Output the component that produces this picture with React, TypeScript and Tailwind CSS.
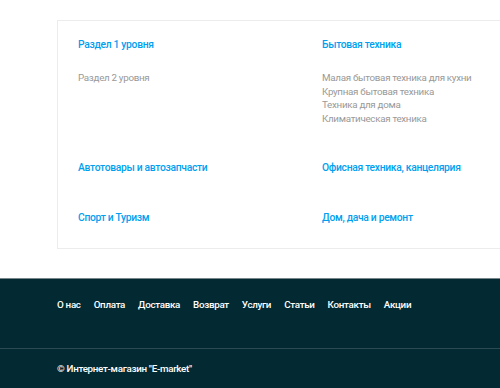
const sections = [
  { title: "Раздел 1 уровня", items: ["Раздел 2 уровня"] },
  {
    title: "Бытовая техника",
    items: [
      "Малая бытовая техника для кухни",
      "Крупная бытовая техника",
      "Техника для дома",
      "Климатическая техника",
    ],
  },
  { title: "Автотовары и автозапчасти", items: [] },
  { title: "Офисная техника, канцелярия", items: [] },
  { title: "Спорт и Туризм", items: [] },
  { title: "Дом, дача и ремонт", items: [] },
];

const links = ["О нас", "Оплата", "Доставка", "Возврат", "Услуги", "Статьи", "Контакты", "Акции"];

export default function App() {
  return (
    <div className="w-[500px] h-[388px] overflow-hidden bg-white font-['Roboto',sans-serif]">
      <div className="pl-[57px] pt-[20px] pb-[29px]">
        <div className="w-[600px] border border-r-0 border-[#ececec] pt-[17px] pb-[23px] pl-[20px]">
          <div className="grid grid-cols-[244px_244px] gap-y-[36px]">
            {sections.map((s) => (
              <div key={s.title}>
                <a className="block text-[10.3px] leading-[14px] tracking-[-0.3px] font-medium text-[#009ff0]">
                  {s.title}
                </a>
                {s.items.length > 0 && (
                  <ul className="mt-[19px]">
                    {s.items.map((i) => (
                      <li key={i} className="text-[9.8px] leading-[13.5px] tracking-[-0.3px] text-[#999999]">
                        {i}
                      </li>
                    ))}
                  </ul>
                )}
              </div>
            ))}
          </div>
        </div>
      </div>
      <footer className="bg-[#032a33] border-t border-[#76878b] h-[110px]">
        <nav className="flex gap-[13px] pl-[57px] pt-[19px] h-[69px]">
          {links.map((l) => (
            <a key={l} className="text-[9.8px] leading-[14px] tracking-[-0.3px] font-medium text-white">
              {l}
            </a>
          ))}
        </nav>
        <div className="border-t border-[#2c4a51] pl-[57px] pt-[13px]">
          <p className="text-[9.8px] leading-[14px] tracking-[-0.3px] font-medium text-white">
            © Интернет-магазин "E-market"
          </p>
        </div>
      </footer>
    </div>
  );
}
